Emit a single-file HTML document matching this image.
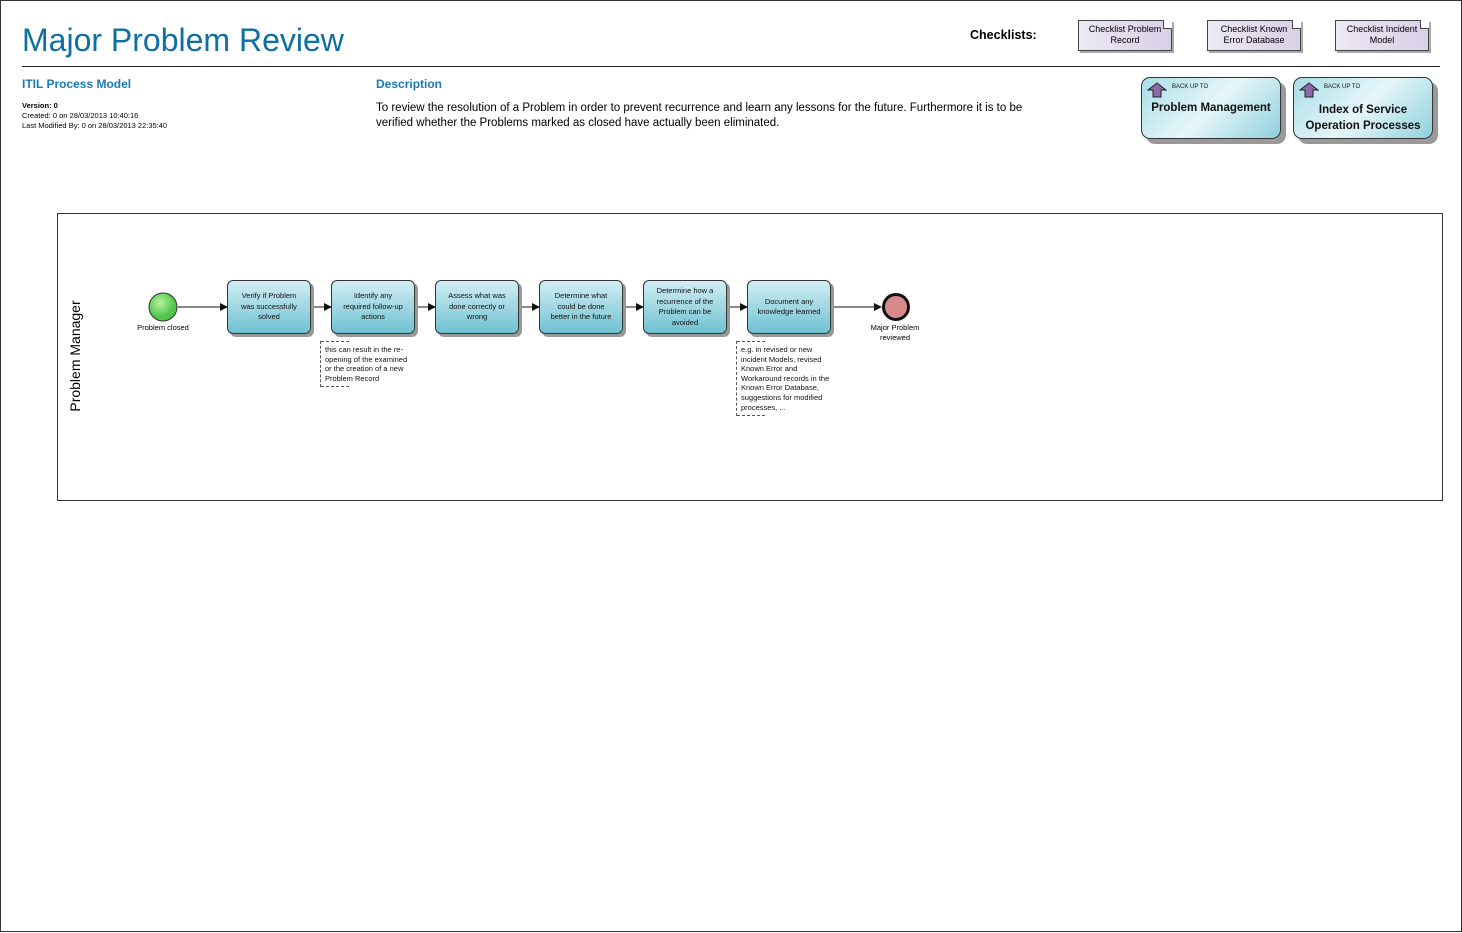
<!DOCTYPE html>
<html><head><meta charset="utf-8"><style>
body{margin:0;width:1462px;height:933px;position:relative;background:#fff;font-family:"Liberation Sans",sans-serif;overflow:hidden}
.a{position:absolute}
.task{position:absolute;top:280px;width:82px;height:52px;border:1px solid #333;border-radius:6px;background:linear-gradient(#d2eef3,#6fc1d2);box-shadow:3px 3px 0 #999;font-size:7.5px;color:#111;display:flex;align-items:center;justify-content:center;text-align:center;line-height:10.5px}
.ck{position:absolute;top:20px;width:94px;height:31px;border:1px solid #444;background:linear-gradient(90deg,#ece8f4,#d8d0e8);font-size:9px;text-align:center;line-height:11px;padding-top:3px;box-sizing:border-box;box-shadow:2px 2px 0 #aaa}
.ck:after{content:"";position:absolute;right:-1px;top:-1px;width:8px;height:8px;background:#fff;border-left:1px solid #444;border-bottom:1px solid #444}
.bk{position:absolute;top:77px;height:60px;border:1px solid #333;border-radius:9px;background:linear-gradient(135deg,#a9dde8,#e6f6f9 50%,#8fd0dd);box-shadow:5px 5px 0 #999;text-align:center;font-weight:bold;font-size:11.5px;color:#111;font-family:"Liberation Sans",sans-serif;white-space:nowrap}
.bk small{position:absolute;left:30px;top:6px;font-size:6px;font-weight:normal}
.note{position:absolute;border-left:1px dashed #555;font-size:7.5px;line-height:9.6px;padding:4px 0 4px 4px;color:#111}
.note:before,.note:after{content:"";position:absolute;left:0;width:28px;border-top:1px dashed #555}
.note:before{top:0}.note:after{bottom:0}
</style></head><body>
<div class="a" style="left:0;top:0;width:1460px;height:930px;border:1px solid #333"></div>
<div class="a" style="left:22px;top:22px;font-size:32px;color:#0e6fa3">Major Problem Review</div>
<div class="a" style="left:22px;top:66px;width:1418px;border-top:1px solid #222"></div>
<div class="a" style="left:970px;top:28px;font-size:12.5px;font-weight:bold">Checklists:</div>
<div class="ck" style="left:1078px">Checklist Problem<br>Record</div>
<div class="ck" style="left:1207px">Checklist Known<br>Error Database</div>
<div class="ck" style="left:1335px">Checklist Incident<br>Model</div>
<div class="a" style="left:22px;top:77px;font-size:12px;font-weight:bold;color:#1a7ab5">ITIL Process Model</div>
<div class="a" style="left:22px;top:101px;font-size:7.5px;line-height:10px"><b>Version: 0</b><br>Created: 0 on 28/03/2013 10:40:16<br>Last Modified By: 0 on 28/03/2013 22:35:40</div>
<div class="a" style="left:376px;top:77px;font-size:12px;font-weight:bold;color:#1a7ab5">Description</div>
<div class="a" style="left:376px;top:101px;font-size:11.5px;line-height:14.5px;width:675px">To review the resolution of a Problem in order to prevent recurrence and learn any lessons for the future. Furthermore it is to be verified whether the Problems marked as closed have actually been eliminated.</div>
<div class="bk" style="left:1141px;width:138px"><svg class="a" style="left:5px;top:4px" width="20" height="16"><path d="M10 1 L19 8 L14 8 L14 15 L6 15 L6 8 L1 8 Z" fill="#8a6aa8" stroke="#222"/></svg><small>BACK UP TO</small><div style="margin-top:24px">Problem Management</div></div>
<div class="bk" style="left:1293px;width:138px"><svg class="a" style="left:5px;top:4px" width="20" height="16"><path d="M10 1 L19 8 L14 8 L14 15 L6 15 L6 8 L1 8 Z" fill="#8a6aa8" stroke="#222"/></svg><small>BACK UP TO</small><div style="margin-top:24px;line-height:16px">Index of Service<br>Operation Processes</div></div>
<div class="a" style="left:57px;top:213px;width:1384px;height:286px;border:1px solid #333"></div>
<div class="a" style="left:10px;top:348px;width:130px;text-align:center;transform:rotate(-90deg);font-size:14px;white-space:nowrap">Problem Manager</div>
<svg class="a" style="left:0;top:0" width="1000" height="400">
<defs><marker id="m" markerWidth="8" markerHeight="8" refX="7" refY="4" orient="auto" markerUnits="userSpaceOnUse"><path d="M0 0 L8 4 L0 8Z" fill="#111"/></marker>
<radialGradient id="g" cx=".4" cy=".35"><stop offset="0" stop-color="#b6f0a0"/><stop offset="1" stop-color="#4fc74a"/></radialGradient></defs>
<g stroke="#111" stroke-width="1" marker-end="url(#m)"><line x1="178" y1="307" x2="227" y2="307"/><line x1="313" y1="307" x2="331" y2="307"/><line x1="417" y1="307" x2="435" y2="307"/><line x1="521" y1="307" x2="539" y2="307"/><line x1="625" y1="307" x2="643" y2="307"/><line x1="729" y1="307" x2="747" y2="307"/><line x1="833" y1="307" x2="881" y2="307"/></g>
<circle cx="163" cy="307" r="14" fill="url(#g)" stroke="#333"/>
<circle cx="896" cy="307" r="12.5" fill="#d88a8a" stroke="#111" stroke-width="3"/>
</svg>
<div class="a" style="left:123px;top:323px;width:80px;text-align:center;font-size:7.5px">Problem closed</div>
<div class="a" style="left:855px;top:323px;width:80px;text-align:center;font-size:7.5px;line-height:9.5px">Major Problem<br>reviewed</div>
<div class="task" style="left:227px">Verify if Problem<br>was successfully<br>solved</div>
<div class="task" style="left:331px">Identify any<br>required follow-up<br>actions</div>
<div class="task" style="left:435px">Assess what was<br>done correctly or<br>wrong</div>
<div class="task" style="left:539px">Determine what<br>could be done<br>better in the future</div>
<div class="task" style="left:643px">Determine how a<br>recurrence of the<br>Problem can be<br>avoided</div>
<div class="task" style="left:747px">Document any<br>knowledge learned</div>
<div class="note" style="left:320px;top:341px;width:100px">this can result in the re-<br>opening of the examined<br>or the creation of a new<br>Problem Record</div>
<div class="note" style="left:736px;top:341px;width:105px">e.g. in revised or new<br>incident Models, revised<br>Known Error and<br>Workaround records in the<br>Known Error Database,<br>suggestions for modified<br>processes, ...</div>
</body></html>
